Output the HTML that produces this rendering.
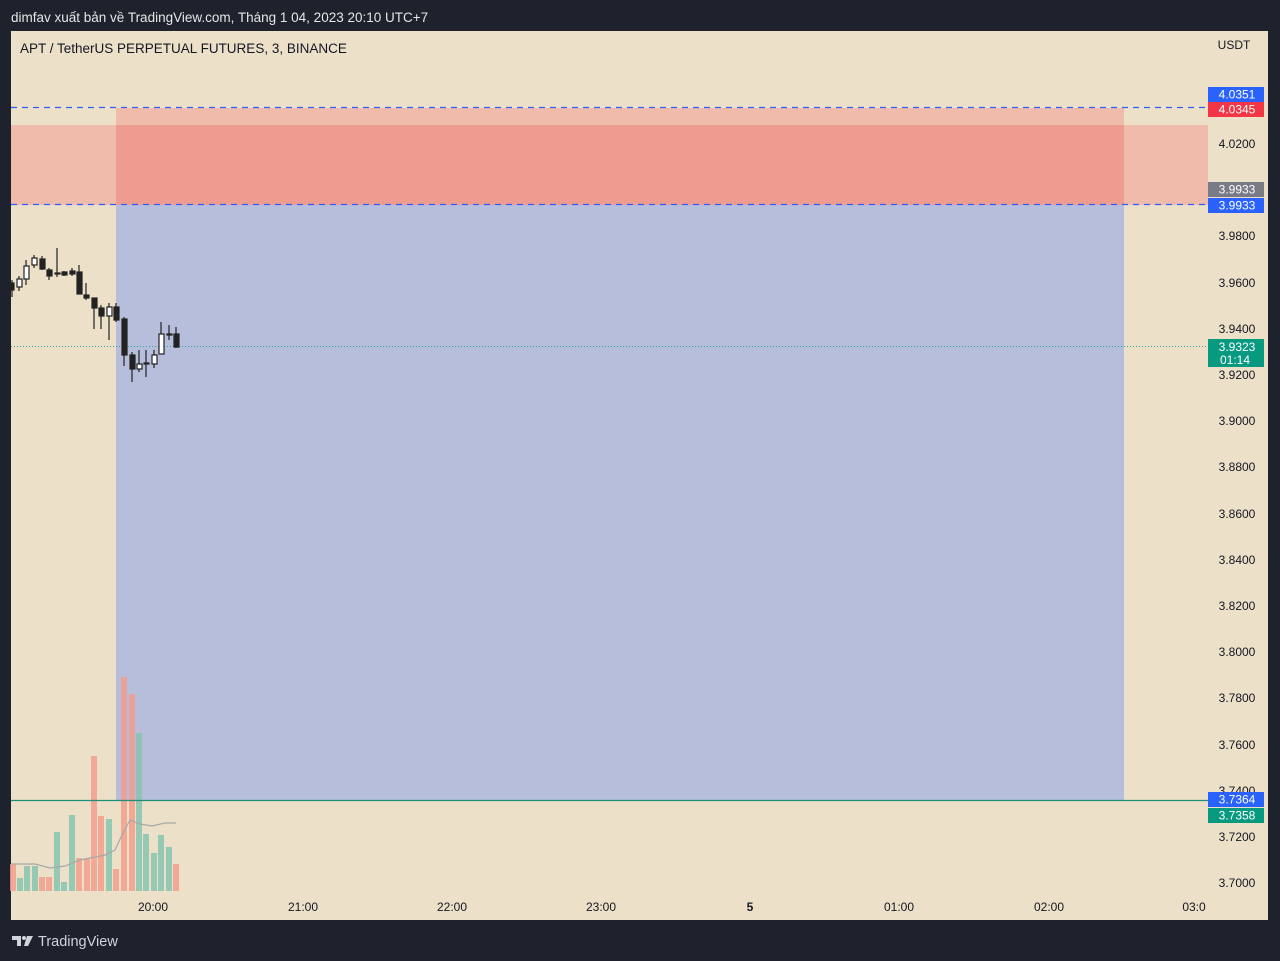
<!DOCTYPE html>
<html><head><meta charset="utf-8"><style>
html,body{margin:0;padding:0;background:#1e222d;width:1280px;height:961px;overflow:hidden}
svg{display:block}
text{font-family:"Liberation Sans","DejaVu Sans",sans-serif}
</style></head><body>
<svg width="1280" height="961" xmlns="http://www.w3.org/2000/svg">
<rect width="1280" height="961" fill="#1e222d"/>
<text x="11" y="22" fill="#e6e6e6" font-size="13.5">dimfav xuất bản về TradingView.com, Tháng 1 04, 2023 20:10 UTC+7</text>
<rect x="11" y="31" width="1257" height="889" fill="#ede0c9"/>
<!-- zones -->
<rect x="11" y="125" width="1197" height="80" fill="#efbcab"/>
<rect x="116" y="108" width="1008" height="17" fill="#efbcab"/>
<rect x="116" y="125" width="1008" height="80" fill="#ee9b90"/>
<rect x="116" y="205" width="1008" height="595" fill="#b6bedb"/>
<!-- volume -->
<g fill-opacity="0.85">
<rect x="10" y="864" width="6" height="27" fill="#f19d8b"/>
<rect x="17" y="878" width="6" height="13" fill="#86c4b0"/>
<rect x="24" y="866" width="6" height="25" fill="#86c4b0"/>
<rect x="32" y="866" width="6" height="25" fill="#86c4b0"/>
<rect x="39" y="877" width="6" height="14" fill="#f19d8b"/>
<rect x="46" y="877" width="6" height="14" fill="#f19d8b"/>
<rect x="54" y="832" width="6" height="59" fill="#86c4b0"/>
<rect x="61" y="882" width="6" height="9" fill="#86c4b0"/>
<rect x="69" y="815" width="6" height="76" fill="#86c4b0"/>
<rect x="76" y="858" width="6" height="33" fill="#f19d8b"/>
<rect x="84" y="859" width="6" height="32" fill="#f19d8b"/>
<rect x="91" y="756" width="6" height="135" fill="#f19d8b"/>
<rect x="98" y="816" width="6" height="75" fill="#f19d8b"/>
<rect x="106" y="819" width="6" height="72" fill="#86c4b0"/>
<rect x="113" y="869" width="6" height="22" fill="#f19d8b"/>
<rect x="121" y="677" width="6" height="214" fill="#f19d8b"/>
<rect x="129" y="694" width="6" height="197" fill="#f19d8b"/>
<rect x="136" y="733" width="6" height="158" fill="#86c4b0"/>
<rect x="143" y="834" width="6" height="57" fill="#86c4b0"/>
<rect x="151" y="853" width="6" height="38" fill="#86c4b0"/>
<rect x="158" y="835" width="6" height="56" fill="#86c4b0"/>
<rect x="166" y="847" width="6" height="44" fill="#86c4b0"/>
<rect x="173" y="864" width="6" height="27" fill="#f19d8b"/>
</g>
<polyline points="11,864 35,864 50,868 65,866 80,860 95,857 105,855 115,850 122,835 130,820 140,824 152,826 165,823 176,823" fill="none" stroke="#a8a8a8" stroke-width="1.2"/>
<!-- lines -->
<line x1="11" y1="107.5" x2="1208" y2="107.5" stroke="#2f5bff" stroke-width="1.2" stroke-dasharray="6,5"/>
<line x1="11" y1="204.5" x2="1208" y2="204.5" stroke="#2f5bff" stroke-width="1.2" stroke-dasharray="6,5"/>
<line x1="11" y1="800.5" x2="1208" y2="800.5" stroke="#1f8f7a" stroke-width="1.3"/>
<line x1="11" y1="346.5" x2="1208" y2="346.5" stroke="#26a69a" stroke-dasharray="1,2"/>
<!-- candles -->
<g stroke="#222" stroke-width="1.2" fill="#222">
<line x1="12" y1="280" x2="12" y2="297"/><rect x="10" y="283" width="4" height="7"/>
<line x1="19" y1="276" x2="19" y2="291"/><rect x="17" y="279" width="5" height="8" fill="#fff"/>
<line x1="26" y1="260" x2="26" y2="285"/><rect x="24" y="266" width="5" height="13" fill="#fff"/>
<line x1="34" y1="255" x2="34" y2="268"/><rect x="32" y="258" width="5" height="7" fill="#fff"/>
<line x1="42" y1="256" x2="42" y2="270"/><rect x="40" y="259" width="5" height="10"/>
<line x1="49" y1="268" x2="49" y2="280"/><rect x="47" y="270" width="5" height="6"/>
<line x1="57" y1="248" x2="57" y2="277"/><rect x="55" y="273" width="5" height="1"/>
<line x1="64" y1="271" x2="64" y2="276"/><rect x="62" y="272" width="5" height="3"/>
<line x1="72" y1="268" x2="72" y2="276"/><rect x="70" y="271" width="5" height="3"/>
<line x1="79" y1="265" x2="79" y2="294"/><rect x="77" y="272" width="5" height="22"/>
<line x1="86" y1="283" x2="86" y2="300"/><rect x="84" y="295" width="5" height="3"/>
<line x1="94" y1="298" x2="94" y2="329"/><rect x="92" y="298" width="5" height="10"/>
<line x1="101" y1="305" x2="101" y2="329"/><rect x="99" y="308" width="5" height="8"/>
<line x1="109" y1="303" x2="109" y2="340"/><rect x="107" y="307" width="5" height="9" fill="#fff"/>
<line x1="116" y1="303" x2="116" y2="322"/><rect x="114" y="307" width="5" height="13"/>
<line x1="124" y1="317" x2="124" y2="366"/><rect x="122" y="319" width="5" height="36"/>
<line x1="132" y1="352" x2="132" y2="382"/><rect x="130" y="355" width="5" height="14"/>
<line x1="139" y1="350" x2="139" y2="372"/><rect x="137" y="364" width="5" height="5" fill="#fff"/>
<line x1="146" y1="350" x2="146" y2="377"/><rect x="144" y="363" width="5" height="1"/>
<line x1="154" y1="350" x2="154" y2="368"/><rect x="152" y="355" width="5" height="9" fill="#fff"/>
<line x1="161" y1="322" x2="161" y2="354"/><rect x="159" y="334" width="5" height="20" fill="#fff"/>
<line x1="169" y1="325" x2="169" y2="340"/><rect x="167" y="334" width="5" height="1"/>
<line x1="176" y1="327" x2="176" y2="348"/><rect x="174" y="334" width="5" height="13"/>
</g>
<text x="20" y="53" fill="#131722" font-size="13.5">APT / TetherUS PERPETUAL FUTURES, 3, BINANCE</text>
<!-- price axis -->
<g fill="#131722" font-size="12" text-anchor="middle">
<text x="1234" y="49">USDT</text>
<text x="1237" y="148">4.0200</text>
<text x="1237" y="240">3.9800</text>
<text x="1237" y="287">3.9600</text>
<text x="1237" y="333">3.9400</text>
<text x="1237" y="379">3.9200</text>
<text x="1237" y="425">3.9000</text>
<text x="1237" y="471">3.8800</text>
<text x="1237" y="518">3.8600</text>
<text x="1237" y="564">3.8400</text>
<text x="1237" y="610">3.8200</text>
<text x="1237" y="656">3.8000</text>
<text x="1237" y="702">3.7800</text>
<text x="1237" y="749">3.7600</text>
<text x="1237" y="795">3.7400</text>
<text x="1237" y="841">3.7200</text>
<text x="1237" y="887">3.7000</text>
</g>
<g font-size="12" text-anchor="middle" fill="#fff">
<rect x="1208" y="87" width="56" height="15" fill="#2962ff"/><text x="1237" y="98.5">4.0351</text>
<rect x="1208" y="102" width="56" height="15" fill="#f23645"/><text x="1237" y="113.5">4.0345</text>
<rect x="1208" y="182" width="56" height="15" fill="#787b86"/><text x="1237" y="193.5">3.9933</text>
<rect x="1208" y="198" width="56" height="15" fill="#2962ff"/><text x="1237" y="209.5">3.9933</text>
<rect x="1208" y="339" width="56" height="28" fill="#089981"/><text x="1237" y="351">3.9323</text><text x="1235" y="364">01:14</text>
<rect x="1208" y="792" width="56" height="15" fill="#2962ff"/><text x="1237" y="803.5">3.7364</text>
<rect x="1208" y="808" width="56" height="15" fill="#089981"/><text x="1237" y="819.5">3.7358</text>
</g>
<!-- time axis -->
<g fill="#131722" font-size="12" text-anchor="middle">
<text x="153" y="911">20:00</text>
<text x="303" y="911">21:00</text>
<text x="452" y="911">22:00</text>
<text x="601" y="911">23:00</text>
<text x="750" y="911" font-weight="bold">5</text>
<text x="899" y="911">01:00</text>
<text x="1049" y="911">02:00</text>
<text x="1194" y="911">03:0</text>
</g>
<!-- logo -->
<g fill="#d1d4dc">
<path d="M12 936h9v10h-4v-6h-5z"/><circle cx="24" cy="938" r="2"/><path d="M27 936h6l-5 10h-4z"/>
</g>
<text x="38" y="946" fill="#d1d4dc" font-size="14.5">TradingView</text>
</svg>
</body></html>
